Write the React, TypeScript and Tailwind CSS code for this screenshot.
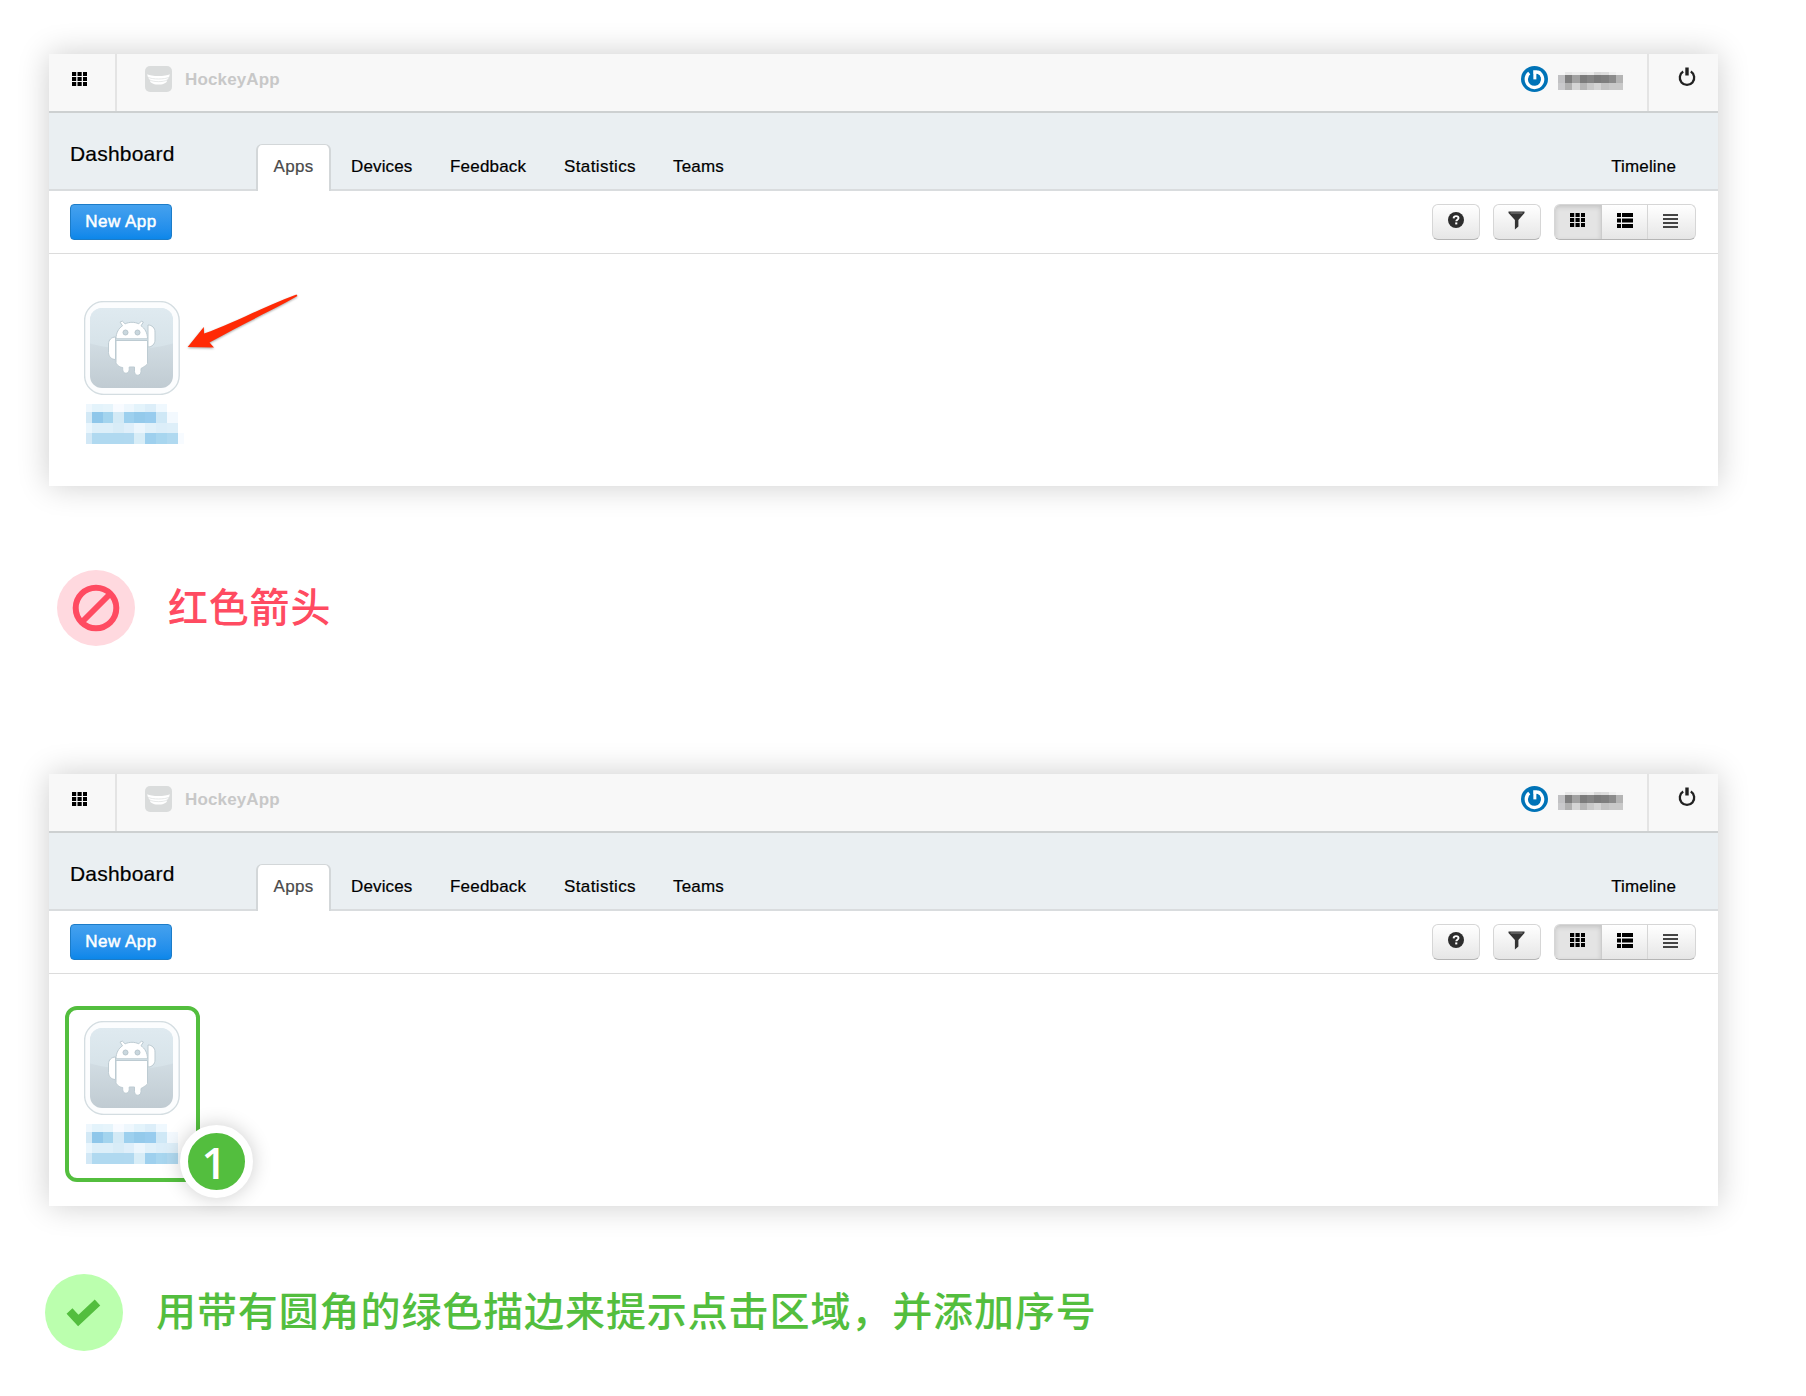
import React from "react";

const labelRows = [
  ["#eef7fd", "#e3f3fb", "#e6f4fb", "#f8fbff", "#eef7fd", "#e3f3fb", "#dceef9", "#eff8fe", "#ffffff", "#ffffff"],
  ["#d3e9f6", "#8fc7ea", "#a3d4ee", "#d3eaf6", "#9dd0ee", "#94caeb", "#98ccee", "#cfe8f6", "#f3f9fe", "#ffffff"],
  ["#eaf6fd", "#ddeff9", "#ddeff9", "#d8ecf7", "#dfeffa", "#ecf6fd", "#e1f1fa", "#dceef9", "#deeff9", "#ffffff"],
  ["#d2e8f6", "#b0d9f0", "#b0d9f0", "#b0d9f0", "#b1d9f0", "#d8edf7", "#9ed0ee", "#a8d6ef", "#b0d9f0", "#f7fbff"],
];

function GridIcon() {
  return (
    <svg width="15" height="14" viewBox="0 0 15 14" fill="#000">
      {[0, 5, 10].map((y) =>
        [0, 5.5, 11].map((x) => <rect key={`${x}-${y}`} x={x} y={y} width="4.2" height="4" />)
      )}
    </svg>
  );
}

function ListIcon() {
  return (
    <svg width="16" height="15" viewBox="0 0 16 15" fill="#000">
      {[0, 5.5, 11].map((y) => (
        <g key={y}>
          <rect x="0" y={y} width="4" height="4" />
          <rect x="5" y={y} width="11" height="4" />
        </g>
      ))}
    </svg>
  );
}

function LinesIcon() {
  return (
    <svg width="15" height="14" viewBox="0 0 15 14" fill="#444">
      {[0, 4, 8, 12].map((y) => (
        <rect key={y} y={y} width="15" height="2" />
      ))}
    </svg>
  );
}

function HelpIcon() {
  return (
    <svg width="16" height="16" viewBox="0 0 16 16">
      <circle cx="8" cy="8" r="8" fill="#2d2d2d" />
      <path d="M5.6 6.4C5.7 4.8 6.7 4.1 8.1 4.1c1.4 0 2.4.8 2.4 2 0 1.6-2.2 1.700-2.200 3.200" fill="none" stroke="#fff" strokeWidth="1.9" />
      <rect x="7.2" y="10.4" width="2.1" height="2" fill="#fff" />
    </svg>
  );
}

function FilterIcon() {
  return (
    <svg width="17" height="19" viewBox="0 0 17 19" fill="#333">
      <path d="M.5.5h16v1.6L10.4 9v6.600L6.900 18.500V9L.500 2.100z" />
      <path d="M2.500 2h12" stroke="#999" strokeWidth=".8" />
    </svg>
  );
}

function HockeyIcon() {
  return (
    <svg width="27" height="26" viewBox="0 0 27 26">
      <rect width="27" height="26" rx="5" fill="#dadcdc" />
      <path d="M2.200 8.200C6 10.600 21 10.600 24.800 8.200l-.9 3.600c-1 1-1.600 1.400-2.100 3.600C20 19.500 7 19.500 5.200 15.400c-.4-2-1.100-2.600-2.100-3.600z" fill="#fff" />
      <path d="M3 11.200c4 2.400 17 2.400 21 0M4.800 14c4 2.200 13.400 2.200 17.400 0" fill="none" stroke="#dadcdc" strokeWidth=".7" />
    </svg>
  );
}

function GravatarIcon() {
  return (
    <svg width="27" height="26" viewBox="0 0 27 26">
      <ellipse cx="13.500" cy="13" rx="13.500" ry="13" fill="#0073b7" />
      <path d="M8.200 7A8.200 8.200 0 1 0 17 5.900" fill="none" stroke="#fff" strokeWidth="3.300" />
      <path d="M12.200 4.200h3.400c1.600.1 3 .6 4 1.400l-2 3.200-2-.9v5.600h-3.400z" fill="#fff" />
      <path d="M8.700 9.500c-1.300 5 1.800 8 5.300 8s6.400-3 5-7.200c-.7-1.500-1.800-2.200-3.400-2.600v6h-3.400V8z" fill="#0073b7" />
    </svg>
  );
}

function PowerIcon() {
  return (
    <svg width="18" height="20" viewBox="0 0 18 20" fill="none" stroke="#222">
      <path d="M5.200 4.600a7.200 7.200 0 1 0 7.600 0" strokeWidth="2.300" />
      <path d="M9 .500v8" strokeWidth="3.400" />
    </svg>
  );
}

function AndroidTile() {
  return (
    <svg width="96" height="94" viewBox="0 0 96 94" className="block">
      <defs>
        <linearGradient id="tileShade" x1="0" y1="0" x2="0" y2="1">
          <stop offset="0" stopColor="#dfeaf0" />
          <stop offset="1" stopColor="#c0cbd2" />
        </linearGradient>
        <linearGradient id="tileGloss" x1="0" y1="0" x2="0" y2="1">
          <stop offset="0" stopColor="#dfeaf0" />
          <stop offset="1" stopColor="#d6e2e8" />
        </linearGradient>
        <clipPath id="tileClip">
          <rect x="6" y="7" width="83" height="80" rx="12" />
        </clipPath>
      </defs>
      <rect x=".6" y=".6" width="94.600" height="92.800" rx="19" fill="#fcfdfe" stroke="#d4dde1" strokeWidth="1.400" />
      <g clipPath="url(#tileClip)">
        <rect x="6" y="7" width="83" height="80" fill="url(#tileShade)" />
        <path d="M6 7h83v35.500Q47.500 54 6 42.500z" fill="url(#tileGloss)" />
      </g>
      <g fill="#fff" stroke="#bdcbd2" strokeWidth="1">
        <path d="M31.500 36v22.500c-4 0-7-3-7-7V43c0-4 3-7 7-7z" />
        <path d="M64 24c4 0 7 3 7 7v8c0 4-3 7-7 7z" />
        <path d="M32 39.500h31.500v23c0 1-3 3-6.500 5v3c0 5-6.500 5-6.500 0v-4.500h-5.300v2.500c0 5-6.500 5-6.500 0v-2c-2.700 0-6.700-3-6.700-5z" />
        <path d="M32 37.800c0-6 2.600-10.400 6.500-13l-2.500-3.700 2.300-1 2.800 2.700c4.500-2 9.200-2 13.700 0l2.600-2.700 2 1-2.400 3.700c3.900 2.600 6.500 7 6.500 13z" />
      </g>
      <circle cx="41.500" cy="31.500" r="2.500" fill="#c9d7de" stroke="#b7c5cc" />
      <circle cx="53.500" cy="31.500" r="2.500" fill="#c9d7de" stroke="#b7c5cc" />
    </svg>
  );
}

function MaskedLabel() {
  return (
    <div className="grid h-[40px] w-[98px] grid-cols-[6px_11px_10px_11px_10px_11px_11px_11px_11px_6px] grid-rows-[8px_11px_10px_11px]">
      {labelRows.flat().map((c, i) => (
        <div key={i} style={{ backgroundColor: c }} />
      ))}
    </div>
  );
}

function MaskedUser() {
  const top = ["#f7f7f7", "#e8e8e8", "#eeeeee", "#e8e8e8", "#ececec", "#d9d9d9", "#dddddd", "#eeeeee", "#f5f5f5"];
  const mid = ["#c1c1c3", "#7f7f7f", "#a2a2a2", "#7c7c7c", "#858585", "#7b7b7b", "#7f7f7f", "#8b8b8b", "#b4b4b4"];
  const low = ["#c9c9cb", "#b0b0b0", "#d5d5d5", "#b6b6b6", "#c9c9c9", "#d4d4d4", "#c3c3c3", "#c9c9c9", "#c9c9c9"];
  return (
    <div className="grid h-[18px] w-[65px] grid-cols-9 grid-rows-[3px_8px_7px]">
      {[...top, ...mid, ...low].map((c, i) => (
        <div key={i} style={{ backgroundColor: c }} />
      ))}
    </div>
  );
}

const plainButton =
  "flex h-[36px] w-[48px] justify-center rounded-[6px] border border-[#d6d6d6] border-b-[#b5b5b5] bg-linear-to-b from-white to-[#e6e6e6]";

function HockeyWindow({ children }: { children: React.ReactNode }) {
  return (
    <section className="h-[432px] w-[1669px] bg-white shadow-[0_0_30px_rgba(0,0,0,0.2)]">
      <header className="flex h-[59px] border-b-2 border-[#cdd0d1] bg-[#f8f8f8]">
        <div className="w-[68px] border-r-2 border-[#e4e4e4] pt-[18px] pl-[23px]">
          <GridIcon />
        </div>
        <div className="flex flex-1 pt-[12px] pl-[28px]">
          <HockeyIcon />
          <span className="mt-px ml-[13px] text-[17px] leading-[26px] font-bold tracking-[0.14px] text-[#c8c8c8]">HockeyApp</span>
        </div>
        <div className="flex w-[126px] gap-[10px] pt-[12px]">
          <GravatarIcon />
          <div className="pt-[6px]">
            <MaskedUser />
          </div>
        </div>
        <div className="w-[71px] border-l-2 border-[#e4e4e4] pt-[13px] pl-[28.500px]">
          <PowerIcon />
        </div>
      </header>
      <nav className="flex h-[78px] items-end border-b-2 border-[#d9dcde] bg-[#eaeff2]">
        <h1 className="mb-[23px] w-[207px] pl-[21px] text-[21px] leading-[24px] tracking-[0.2px] text-black [-webkit-text-stroke:0.2px_black]">Dashboard</h1>
        <div className="-mb-[2px] flex h-[47px] w-[75px] justify-center rounded-t-[6px] border-x-2 border-t border-[#d3d7d9] bg-white pt-[12px] text-[17px] leading-[20px] tracking-[0.3px] text-[#4a4a4a] [-webkit-text-stroke:0.2px_#4a4a4a]">
          Apps
        </div>
        <div className="flex flex-1 pb-[12px] text-[17px] leading-[20px] tracking-[0.1px] text-black [-webkit-text-stroke:0.2px_black]">
          <span className="ml-[20px] w-[99px] tracking-[0.15px]">Devices</span>
          <span className="w-[114px] tracking-[0.2px]">Feedback</span>
          <span className="w-[109px] tracking-[0.4px]">Statistics</span>
          <span className="tracking-[0.2px]">Teams</span>
          <span className="mr-[42px] ml-auto tracking-[0.15px]">Timeline</span>
        </div>
      </nav>
      <div className="flex h-[63px] border-b border-[#dcdcdc] pt-[13px] pr-[22px] pl-[21px]">
        <button className="h-[36px] w-[102px] rounded-[4px] border border-[#1c7cc8] bg-linear-to-b from-[#44a1ee] to-[#0b87ea] text-[17px] leading-[20px] tracking-[0.5px] text-white [-webkit-text-stroke:0.5px_white]">
          New App
        </button>
        <div className="ml-auto flex gap-[13px]">
          <div className={`${plainButton} pt-[7px]`}>
            <HelpIcon />
          </div>
          <div className={`${plainButton} pt-[6px] pr-[2px]`}>
            <FilterIcon />
          </div>
          <div className="flex h-[36px] w-[142px] overflow-hidden rounded-[6px] border border-[#d6d6d6] border-b-[#b5b5b5] bg-linear-to-b from-white to-[#e6e6e6]">
            <div className="w-[46px] bg-[#e4e4e4] pt-[8px] pl-[15px] shadow-[inset_0_2px_5px_rgba(0,0,0,0.15)]">
              <GridIcon />
            </div>
            <div className="w-[46px] border-l border-[#cccccc] pt-[8px] pl-[15px]">
              <ListIcon />
            </div>
            <div className="flex-1 border-l border-[#d6d6d6] pt-[9px] pl-[15px]">
              <LinesIcon />
            </div>
          </div>
        </div>
      </div>
      {children}
    </section>
  );
}

function AppEntry() {
  return (
    <div>
      <AndroidTile />
      <div className="mt-[9px] ml-[2px]">
        <MaskedLabel />
      </div>
    </div>
  );
}

export default function App() {
  return (
    <main className="h-[1396px] w-[1806px] overflow-hidden bg-white pt-[54px] pl-[49px] font-['Liberation_Sans',Arial,sans-serif]">
      <HockeyWindow>
        <div className="relative pt-[47px] pl-[35px]">
          <AppEntry />
          <svg className="absolute top-[36px] left-[134px] drop-shadow-[0_1px_1px_rgba(0,0,0,0.35)]" width="120" height="64" viewBox="0 0 120 64">
            <path d="M4.700 57 20.800 37l.3 6.500C48 34 78 18 113.500 4.500l1 1.600C85 22.500 52 38 26.500 52.500l4.500 5z" fill="#ff2a05" />
          </svg>
        </div>
      </HockeyWindow>

      <div className="mt-[84px] ml-[8px] flex h-[76px] items-center">
        <svg width="78" height="76" viewBox="0 0 78 76">
          <ellipse cx="39" cy="38" rx="39" ry="38" fill="#ffd9df" />
          <circle cx="39" cy="38" r="20.300" fill="none" stroke="#ff4b61" strokeWidth="6" />
          <path d="M25 52 53 24" stroke="#ff4b61" strokeWidth="6" />
        </svg>
        <p className="mb-[6px] ml-[33px] font-['Noto_Sans_CJK_SC',sans-serif] text-[40px] leading-[60px] font-medium tracking-[0.8px] text-[#ff4b61]">红色箭头</p>
      </div>

      <div className="mt-[128px]">
        <HockeyWindow>
          <div className="flex pt-[32px] pl-[16px]">
            <div className="relative h-[176px] w-[135px] rounded-[12px] border-4 border-[#53be3e] pt-[11px] pl-[15px]">
              <AppEntry />
              <div className="absolute top-[115px] left-[111px] flex size-[73px] items-center justify-center rounded-full border-8 border-white bg-[#53be3e] shadow-[0_0_20px_rgba(0,0,0,0.2)]">
                <span className="mr-[5px] font-['Open_Sans',sans-serif] text-[44px] leading-[56px] font-semibold text-white">1</span>
              </div>
            </div>
          </div>
        </HockeyWindow>
      </div>

      <div className="mt-[67px] -ml-[4px] flex h-[78px] items-center">
        <svg width="78" height="78" viewBox="0 0 78 78">
          <ellipse cx="39" cy="39.500" rx="39" ry="38.500" fill="#bbffae" />
          <path d="m24.500 37 8.800 9.500L52.500 28.500" transform="translate(0 1)" fill="none" stroke="#53be3e" strokeWidth="8" />
        </svg>
        <p className="mb-[7px] ml-[33px] font-['Noto_Sans_CJK_SC',sans-serif] text-[40px] leading-[60px] font-medium tracking-[0.900px] text-[#53be3e]">
          用带有圆角的绿色描边来提示点击区域，并添加序号
        </p>
      </div>
    </main>
  );
}
